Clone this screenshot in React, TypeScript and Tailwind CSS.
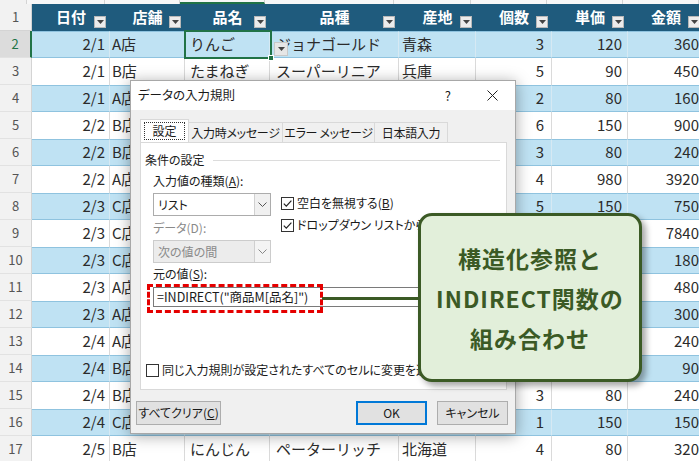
import React from 'react'

type Row = [string, string, string, string, string, number | string, number | string, number]

// cells that sit fully under the dialog / callout are left blank
const ROWS: Row[] = [
  ['2/1', 'A店', 'りんご', 'ジョナゴールド', '青森', 3, 120, 360],
  ['2/1', 'B店', 'たまねぎ', 'スーパーリニア', '兵庫', 5, 90, 450],
  ['2/1', 'A店', '', '', '', 2, 80, 160],
  ['2/2', 'B店', '', '', '', 6, 150, 900],
  ['2/2', 'B店', '', '', '', 3, 80, 240],
  ['2/2', 'A店', '', '', '', 4, 980, 3920],
  ['2/3', 'C店', '', '', '', 5, 150, 750],
  ['2/3', 'C店', '', '', '', '', '', 7840],
  ['2/3', 'C店', '', '', '', '', '', 180],
  ['2/3', 'A店', '', '', '', '', '', 480],
  ['2/3', 'A店', '', '', '', '', '', 300],
  ['2/4', 'A店', '', '', '', '', '', 240],
  ['2/4', 'B店', '', '', '', '', '', 90],
  ['2/4', 'B店', '', '', '', 3, 80, 240],
  ['2/4', 'C店', '', '', '', 1, 150, 150],
  ['2/5', 'B店', 'にんじん', 'ペーターリッチ', '北海道', 4, 80, 320],
]

const COLS = [
  { label: '日付', width: 'w-[78px]', cell: 'justify-end pr-[4px]' },
  { label: '店舗', width: 'w-[75px]', cell: 'justify-start pl-[2px]' },
  { label: '品名', width: 'w-[85px]', cell: 'justify-start pl-[5px]' },
  { label: '品種', width: 'w-[129px]', cell: 'justify-start pl-[6px]' },
  { label: '産地', width: 'w-[77px]', cell: 'justify-start pl-[3px]' },
  { label: '個数', width: 'w-[76px]', cell: 'justify-end pr-[7px]' },
  { label: '単価', width: 'w-[76px]', cell: 'justify-end pr-[5px]' },
  { label: '金額', width: 'w-[76px]', cell: 'justify-end pr-[4px]' },
]

function FilterButton() {
  return (
    <span className="absolute right-[4px] bottom-[3px] flex h-[12px] w-[12px] items-center justify-center border border-[#b8b8b8] bg-[#ececec]">
      <svg width="7" height="4" viewBox="0 0 7 4">
        <path d="M0 0 L7 0 L3.5 4 Z" fill="#444" />
      </svg>
    </span>
  )
}

function Chevron({ color = '#555' }: { color?: string }) {
  return (
    <svg width="9" height="5" viewBox="0 0 9 5">
      <path d="M0.5 0.5 L4.5 4.5 L8.5 0.5" fill="none" stroke={color} strokeWidth="1" />
    </svg>
  )
}

function CheckBox({ checked }: { checked?: boolean }) {
  return (
    <span className="flex h-[13px] w-[13px] shrink-0 items-center justify-center border border-[#333] bg-white">
      {checked && (
        <svg width="11" height="11" viewBox="0 0 11 11">
          <path d="M1.8 5.6 L4.3 8.2 L9.4 2.6" fill="none" stroke="#222" strokeWidth="1.2" />
        </svg>
      )}
    </span>
  )
}

function Sheet() {
  return (
    <div className="flex flex-col">
      {/* column letters strip (mostly cut off) */}
      <div className="flex h-[4px]">
        <div className="w-[32px] border-r border-[#d4d4d4] bg-[#f2f2f2]" />
        {COLS.map((c, i) => (
          <div
            key={c.label}
            className={`${c.width} shrink-0 border-r border-[#d4d4d4] bg-[#f7f7f7] ${i === 2 ? 'border-b-2 border-b-[#217346]' : ''}`}
          />
        ))}
      </div>

      {/* header row */}
      <div className="flex h-[27px]">
        <div className="flex w-[32px] shrink-0 items-center justify-center border-r border-b border-[#d4d4d4] bg-[#f2f2f2] text-[13px] text-[#555]">
          1
        </div>
        {COLS.map((c) => (
          <div
            key={c.label}
            className={`relative flex ${c.width} shrink-0 items-center justify-center bg-[#1f5b7d] text-[15px] font-bold text-white`}
          >
            {c.label}
            <FilterButton />
          </div>
        ))}
      </div>

      {ROWS.map((r, idx) => {
        const n = idx + 2
        const blue = n % 2 === 0
        const active = n === 2
        return (
          <div key={n} className="flex h-[27px]">
            <div
              className={`flex w-[32px] shrink-0 items-center justify-center border-b border-[#e2e2e2] text-[13px] ${
                active ? 'border-r-2 border-r-[#217346] bg-[#dcdcdc] text-[#217346]' : 'border-r border-r-[#d4d4d4] bg-[#f2f2f2] text-[#555]'
              }`}
            >
              {n}
            </div>
            {r.map((v, i) => (
              <div
                key={i}
                className={`flex ${COLS[i].width} ${COLS[i].cell} shrink-0 items-center overflow-hidden whitespace-nowrap text-[15px] text-[#2b2b2b] ${
                  blue
                    ? 'border-y border-y-[#8fc3df] border-r border-r-[#d6e9f3] bg-[#bfe2f3]'
                    : 'border-r border-r-[#dadada] bg-white'
                }`}
              >
                {v}
              </div>
            ))}
          </div>
        )
      })}
    </div>
  )
}

function Dialog() {
  const tabs = [
    { label: '入力時メッセージ', width: 'w-[95px]' },
    { label: 'エラー メッセージ', width: 'w-[93px]' },
    { label: '日本語入力', width: 'w-[74px]' },
  ]
  return (
    <div className="absolute left-[130px] top-[80px] flex h-[354px] w-[386px] flex-col border border-[#a8a8a8] bg-[#f0f0f0] text-[12px] text-[#1a1a1a] shadow-[0_2px_14px_rgba(0,0,0,0.35)] [font-feature-settings:'palt']">
      {/* title bar */}
      <div className="flex h-[29px] shrink-0 items-center bg-white pl-[7px]">
        <span className="text-[12.5px]">データの入力規則</span>
        <span className="ml-auto mr-[36px] text-[13px]">?</span>
        <svg className="mr-[17px]" width="11" height="11" viewBox="0 0 11 11">
          <path d="M0.5 0.5 L10.5 10.5 M10.5 0.5 L0.5 10.5" stroke="#222" strokeWidth="1" />
        </svg>
      </div>

      <div className="flex flex-1 flex-col pl-[9px] pt-[10px]">
        {/* tabs */}
        <div className="relative z-10 flex h-[22px] items-end">
          <div className="flex h-[23px] w-[49px] items-center justify-center border border-b-0 border-[#d9d9d9] bg-white">
            <span className="border border-dotted border-[#333] px-[7px] leading-[16px]">設定</span>
          </div>
          {tabs.map((t) => (
            <div
              key={t.label}
              className={`-ml-px flex h-[20px] ${t.width} items-center justify-center whitespace-nowrap border border-b-0 border-[#d9d9d9] bg-[#f0f0f0] tracking-[-0.3px]`}
            >
              {t.label}
            </div>
          ))}
        </div>

        {/* tab panel */}
        <div className="flex h-[248px] w-[367px] flex-col border border-[#d9d9d9] bg-white">
          <div className="mt-[9px] flex items-center pl-[4px] pr-[6px] leading-[16px]">
            <span>条件の設定</span>
            <span className="ml-[8px] h-px flex-1 bg-[#dcdcdc]" />
          </div>

          <div className="mt-[5px] pl-[12px] leading-[16px]">
            入力値の種類(<span className="underline">A</span>):
          </div>

          <div className="mt-[4px] flex pl-[12px]">
            <div className="flex w-[118px] flex-col">
              <div className="flex h-[23px] border border-[#acacac] bg-white">
                <span className="flex flex-1 items-center pl-[4px]">リスト</span>
                <span className="flex w-[16px] items-center justify-center border-l border-[#d0d0d0] bg-[#f0f0f0]">
                  <Chevron />
                </span>
              </div>
              <div className="mt-[4px] leading-[16px] text-[#8a8a8a]">データ(D):</div>
              <div className="mt-[4px] flex h-[23px] border border-[#cccccc] bg-[#ececec] text-[#8a8a8a]">
                <span className="flex flex-1 items-center pl-[4px]">次の値の間</span>
                <span className="flex w-[16px] items-center justify-center border-l border-[#d0d0d0] bg-[#f4f4f4]">
                  <Chevron color="#888" />
                </span>
              </div>
            </div>
            <div className="ml-[10px] flex flex-col gap-[6px] pt-[2px]">
              <div className="flex h-[16px] items-center gap-[3px] whitespace-nowrap">
                <CheckBox checked />
                <span>
                  空白を無視する(<span className="underline">B</span>)
                </span>
              </div>
              <div className="flex h-[16px] items-center gap-[3px] whitespace-nowrap">
                <CheckBox checked />
                <span>ドロップダウン リストから選択</span>
              </div>
            </div>
          </div>

          <div className="mt-[3px] pl-[12px] leading-[16px]">
            元の値(<span className="underline">S</span>):
          </div>

          <div className="relative ml-[12px] mt-[5px] flex h-[20px] w-[345px] items-center border border-[#7a7a7a] bg-white pl-[3px] text-[12.5px]">
            =INDIRECT("商品M[品名]")
            <div className="absolute -left-[7px] -top-[4px] h-[29px] w-[176px] border-[3px] border-dashed border-[#e50000]" />
          </div>

          <div className="mb-[11px] mt-auto flex h-[16px] items-center gap-[3px] whitespace-nowrap pl-[5px]">
            <CheckBox />
            <span>同じ入力規則が設定されたすべてのセルに変更を適用す</span>
          </div>
        </div>

        {/* buttons */}
        <div className="-ml-[4px] mt-[11px] flex w-[372px]">
          <div className="flex h-[24px] w-[85px] items-center justify-center border border-[#adadad] bg-[#e1e1e1]">
            すべてクリア(<span className="underline">C</span>)
          </div>
          <div className="ml-auto flex h-[24px] w-[71px] items-center justify-center border-2 border-[#0078d7] bg-[#e1e1e1]">
            OK
          </div>
          <div className="ml-[10px] flex h-[24px] w-[71px] items-center justify-center border border-[#adadad] bg-[#e1e1e1]">
            キャンセル
          </div>
        </div>
      </div>
    </div>
  )
}

export default function App() {
  return (
    <div className="relative h-[461px] w-[699px] overflow-hidden bg-white font-['Noto_Sans_CJK_JP','Noto_Sans',sans-serif]">
      <Sheet />

      {/* active cell */}
      <div className="absolute left-[184px] top-[30px] h-[29px] w-[88px] border-2 border-[#217346]" />
      <div className="absolute left-[268px] top-[55px] h-[6px] w-[6px] border border-white bg-[#217346]" />
      <div className="absolute left-[274px] top-[42px] flex h-[14px] w-[14px] items-center justify-center border border-[#c8c8c8] bg-[#e6e6e6]">
        <svg width="7" height="4" viewBox="0 0 7 4">
          <path d="M0 0 L7 0 L3.5 4 Z" fill="#444" />
        </svg>
      </div>

      <Dialog />

      {/* connector */}
      <div className="absolute left-[322px] top-[297px] h-[3px] w-[100px] bg-[#3b5a25]" />

      {/* callout */}
      <div className="absolute left-[418px] top-[213px] flex h-[169px] w-[224px] flex-col items-center justify-center rounded-[14px] border-[3px] border-[#3b5a25] bg-[#e2efda] text-[23px] font-bold leading-[40px] tracking-[1px] text-[#3b5a25] shadow-[4px_4px_6px_rgba(0,0,0,0.35)]">
        <span>構造化参照と</span>
        <span>INDIRECT関数の</span>
        <span>組み合わせ</span>
      </div>
    </div>
  )
}
